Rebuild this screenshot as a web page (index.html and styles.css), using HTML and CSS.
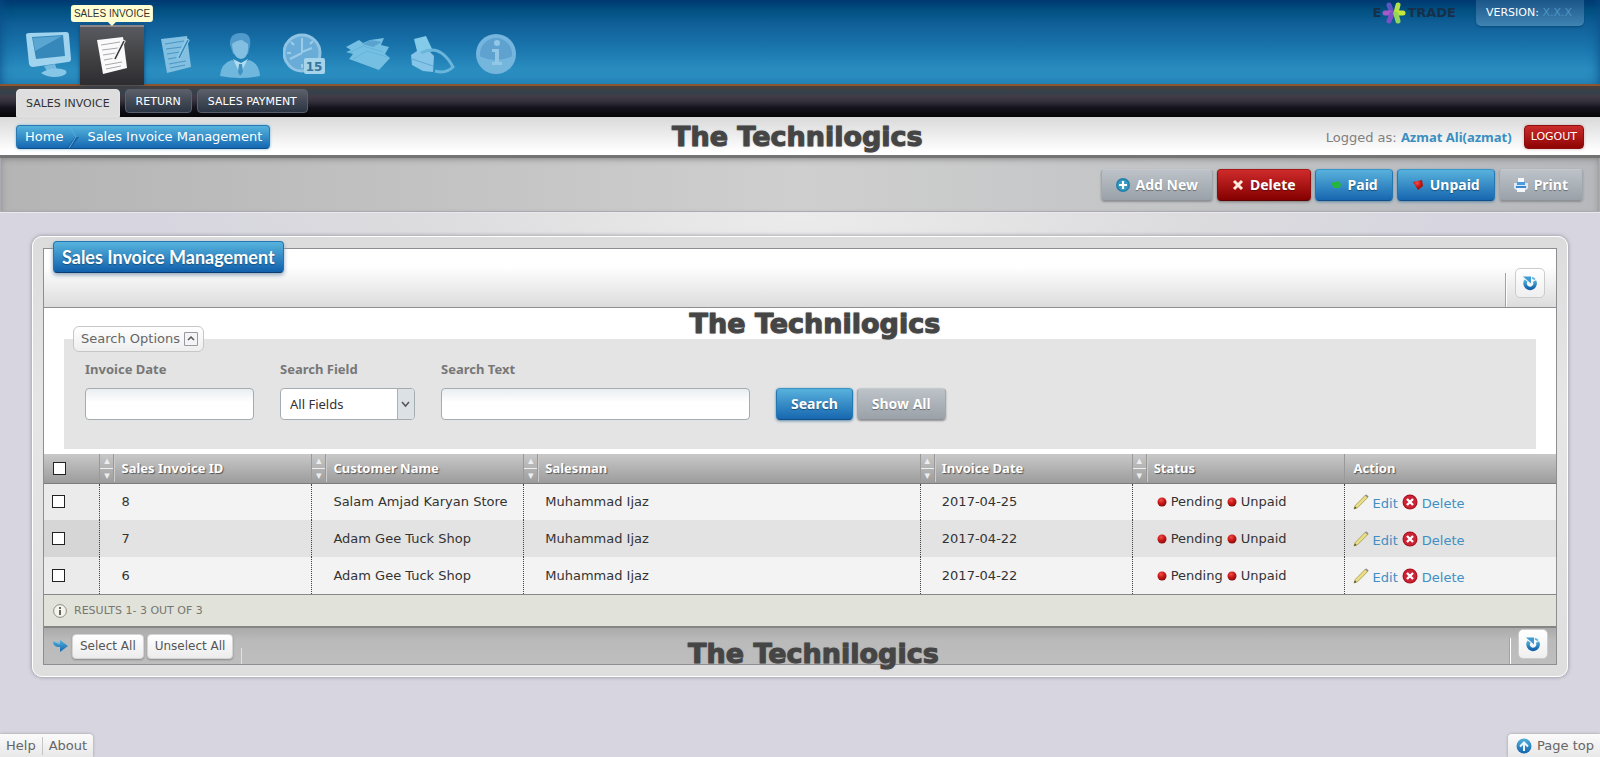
FILE: index.html
```html
<!DOCTYPE html>
<html lang="en">
<head>
<meta charset="utf-8">
<title>Sales Invoice Management</title>
<link rel="stylesheet" href="styles.css">
</head>
<body>
<svg class="defs" aria-hidden="true">
  <defs>
    <linearGradient id="blue" x1="0" y1="0" x2="0" y2="1"><stop offset="0" stop-color="#4fb0d8"/><stop offset="1" stop-color="#1565ae"/></linearGradient>
    <radialGradient id="red" cx=".4" cy=".3" r=".7"><stop offset="0" stop-color="#f0504a"/><stop offset=".5" stop-color="#cc1a1a"/><stop offset="1" stop-color="#8c0c0c"/></radialGradient>
    <symbol id="sheet" viewBox="0 0 32 38">
      <path class="paper" d="M1 3 L27 0 L31 31 L7 37 Z"/>
      <path class="rules" d="M5 8 L24 5 M6 13 L22 11 M7 18 L20 16 M8 23 L19 21 M9 28 L26 25 M10 32 L25 29" fill="none" stroke-width="1"/>
      <path class="pen" d="M28 3 L18 23" fill="none" stroke-width="4"/>
      <path class="pen-core" d="M28 4 L19 22" fill="none" stroke-width="1.6"/>
    </symbol>
    <symbol id="refresh" viewBox="0 0 16 16">
      <path d="M4 5.500 A5 5 0 1 0 12.500 6" fill="none" stroke="url(#blue)" stroke-width="3.600"/>
      <path d="M1 1.500 H9 V8.500 Z" fill="#3f9bd2"/>
      <path d="M10 2.500 l3 2" stroke="#6ab7df" stroke-width="2"/>
    </symbol>
    <symbol id="ball" viewBox="0 0 10 10"><circle cx="5" cy="5" r="4.500" fill="url(#red)"/></symbol>
    <symbol id="cross" viewBox="0 0 16 16"><circle cx="8" cy="8" r="7.500" fill="#a80f1d"/><circle cx="8" cy="8" r="6.500" fill="#cb2436"/><path d="M5 5 L11 11 M11 5 L5 11" stroke="#fff" stroke-width="2.400"/></symbol>
    <symbol id="pencil" viewBox="0 0 16 16"><path d="M1 15 L2.200 11.500 L12.500 1 L15 3.200 L4.500 13.800 Z" fill="#e9dd86" stroke="#a3994f" stroke-width=".8"/><path d="M12 1.500 L14.500 3.800 L15.500 2.500 L13.500 .5 Z" fill="#8c8c8c"/><path d="M1 15 L2 12.500 L3.500 14 Z" fill="#444"/></symbol>
  </defs>
</svg>

<header class="top">
  <nav class="modules" aria-label="Modules">
    <a class="module" href="#" aria-label="Desktop">
      <svg width="48" height="46" viewBox="0 0 48 46"><path d="M2 3 Q2 1 5 1 L42 0 Q45 0 45 3 L47 27 Q47 30 44 30 L9 35 Q6 35 5 32 Z" fill="#9fd3ee"/><path d="M8 5 L39 3 L41 24 L12 27 Z" fill="#3688ba"/><path d="M9 6 L38 4 L11 19 Z" fill="#5aa6d2"/><path d="M20 34 L31 32 L33 38 L23 39 Z" fill="#75b9de"/><path d="M17 41 Q28 34 41 38 Q45 41 38 44 Q26 47 17 41 Z" fill="#86c6e6"/></svg>
    </a>
    <a class="module active" href="#" aria-label="Sales invoice">
      <svg width="32" height="38"><use href="#sheet"/></svg>
      <span class="tip">SALES INVOICE</span>
    </a>
    <a class="module" href="#" aria-label="Purchase invoice">
      <svg class="faded" width="32" height="38"><use href="#sheet"/></svg>
    </a>
    <a class="module" href="#" aria-label="Customers">
      <svg width="42" height="46" viewBox="0 0 42 46"><path d="M11 13 Q10 1 22 1 Q33 1 31 14 L29 22 L14 22 Z" fill="#4f9aca"/><path d="M13 12 Q18 8 23 8 L29 12 Q30 26 22 27 Q14 26 13 12 Z" fill="#83bfe0"/><path d="M1 44 Q2 31 13 28 L21 33 L30 28 Q40 31 41 44 Q21 48 1 44 Z" fill="#70b7de"/><path d="M14 27 L21 42 L29 27 L22 31 Z" fill="#b0dcf0"/><path d="M20 32 L23 32 L24 40 L21 44 L19 40 Z" fill="#4192c2"/></svg>
    </a>
    <a class="module" href="#" aria-label="Calendar">
      <svg width="42" height="44" viewBox="0 0 42 44"><circle cx="19" cy="20" r="18" fill="#69acd8" stroke="#8fc4e4" stroke-width="3"/><path d="M19 5 V19 L29 15 M19 20 L7 26 M8 9 l3 3 M30 8 l-3 3 M4 20 h4 M19 31 v4" stroke="#9bcce8" stroke-width="2" fill="none"/><rect x="21" y="25" width="21" height="16" rx="2" fill="#a5d4eb"/><text x="31" y="38" text-anchor="middle" class="cal-text">15</text></svg>
    </a>
    <a class="module" href="#" aria-label="Stock">
      <svg width="46" height="34" viewBox="0 0 46 34"><path d="M1 9 L14 2 L18 5 L25 2 L39 0 L36 7 L44 9 L40 16 L45 20 L34 32 L4 21 L8 16 L1 14 L6 12 Z" fill="#75c0e2"/><path d="M4 15 L18 8 L38 14 M8 21 L22 13 L42 19" stroke="#66b3da" fill="none"/><path d="M17 6 L26 2 L37 4 L28 9 Z" fill="#5ba3cf"/></svg>
    </a>
    <a class="module" href="#" aria-label="Print">
      <svg width="46" height="38" viewBox="0 0 46 38"><path d="M5 3 L17 0 L24 15 L9 19 Z" fill="#83cbe8"/><path d="M2 19 L8 15 L20 15 L25 20 L24 36 L14 35 L3 29 Z" fill="#86c5e7"/><path d="M3 23 L24 30" stroke="#5ca9d4"/><path d="M12 17 Q31 7 44 31 Q37 38 26 35" fill="none" stroke="#69b5dc" stroke-width="3"/></svg>
    </a>
    <a class="module" href="#" aria-label="Information">
      <svg width="42" height="44" viewBox="0 0 42 44"><circle cx="21" cy="21" r="20" fill="#75b5de"/><circle cx="21" cy="21" r="16" fill="#5fa2cf"/><path d="M4 23 Q21 31 38 23 A17 17 0 0 1 4 23" fill="#74b6dc"/><circle cx="22" cy="10" r="3" fill="#93c7e6"/><path d="M17 16 H24 V29 H27 V32 H17 V29 H20 V19 H17 Z" fill="#93c7e6"/></svg>
    </a>
  </nav>
  <div class="brand">
    <span>E</span>
    <svg width="26" height="24" viewBox="0 0 24 24" aria-hidden="true"><g stroke-width="5" stroke-linecap="round"><path d="M10 12 L7 4" stroke="#5f54c6"/><path d="M9 12 L3 12" stroke="#a55ac8"/><path d="M10 13 L7 20" stroke="#7d4fc4"/><path d="M14 12 L16 4" stroke="#b6e04a"/><path d="M15 12 L21 12" stroke="#c5e83a"/><path d="M14 13 L16 20" stroke="#8fd65a"/></g></svg>
    <span>TRADE</span>
  </div>
  <div class="version"><b>VERSION:</b> <span>X.X.X</span></div>
</header>

<nav class="tabs" aria-label="Sales invoice sections">
  <a class="tab current" href="#">SALES INVOICE</a>
  <a class="tab" href="#">RETURN</a>
  <a class="tab" href="#">SALES PAYMENT</a>
</nav>

<div class="crumb-bar">
  <nav class="crumbs" aria-label="Breadcrumb"><a href="#">Home</a><svg width="12" height="22" viewBox="0 0 12 22" aria-hidden="true"><path d="M0 22 L8 11 L12 11 L4 22 Z" fill="#1b5f9f"/><path d="M2 0 L9 11 L2 22" fill="none" stroke="#56afdb"/></svg><a href="#">Sales Invoice Management</a></nav>
  <div class="mark mark-top">The Technilogics</div>
  <div class="session"><span>Logged as: <a href="#">Azmat Ali(azmat)</a></span><button class="logout" type="button">LOGOUT</button></div>
</div>

<div class="toolbar">
  <button class="btn grey" type="button"><svg width="14" height="14" viewBox="0 0 14 14"><circle cx="7" cy="7" r="7" fill="#247fa8"/><circle cx="7" cy="7" r="5.500" fill="#3499c2"/><path d="M7 3 V11 M3 7 H11" stroke="#fff" stroke-width="2.200"/></svg>Add New</button>
  <button class="btn red" type="button"><svg width="12" height="12" viewBox="0 0 12 12"><path d="M2 2 L10 10 M10 2 L2 10" stroke="#ffeadb" stroke-width="3"/></svg>Delete</button>
  <button class="btn blue" type="button"><svg width="12" height="12" viewBox="0 0 12 12"><path d="M1 4 L8 2 L11 5 L10 9 L4 9 Z" fill="#26b63d"/></svg>Paid</button>
  <button class="btn blue" type="button"><svg width="12" height="12" viewBox="0 0 12 12"><path d="M1 3 L10 1 L11 7 L6 11 Z" fill="url(#red)"/></svg>Unpaid</button>
  <button class="btn grey" type="button"><svg width="14" height="14" viewBox="0 0 14 14"><path d="M4 0 H10 V5 H4 Z" fill="#f5f9fd"/><path d="M0 5 H3 V7 H11 V5 H14 V10 L12 12 H2 L0 10 Z" fill="#dce9f5"/><path d="M3 4 H11 V7 H3 Z" fill="#4a9be0"/><path d="M2 8 H12 V10 H2 Z" fill="#3b87cf"/><path d="M3 10 H11 V14 H3 Z" fill="#f2f6fa"/></svg>Print</button>
</div>

<main class="frame">
  <section class="panel">
    <div class="panel-head">
      <h1>Sales Invoice Management</h1>
      <div class="reload-slot"><button class="reload" type="button" aria-label="Refresh"><svg width="16" height="16"><use href="#refresh"/></svg></button></div>
    </div>
    <div class="mark mark-mid">The Technilogics</div>
    <form class="search">
      <button class="legend" type="button">Search Options <svg width="14" height="14" viewBox="0 0 14 14"><path d="M.5 .5 H13.500 V13.500 H.5 Z" fill="#f4f4f6" stroke="#9a9aa2"/><path d="M4 8 L7 5 L10 8" fill="none" stroke="#555" stroke-width="1.500"/></svg></button>
      <div class="fields">
        <div class="field date"><label for="date">Invoice Date</label><input id="date" type="text"></div>
        <div class="field pick"><label for="column">Search Field</label><div class="select-box"><select id="column"><option>All Fields</option></select><svg width="17" height="30" viewBox="0 0 17 30" aria-hidden="true"><path d="M0 0 H17 V30 H0 Z" fill="#dce1e6"/><path d="M.5 0 V30" stroke="#a9b0b6"/><path d="M5 13 L8.500 17 L12 13" fill="none" stroke="#555" stroke-width="1.500"/></svg></div></div>
        <div class="field term"><label for="term">Search Text</label><input id="term" type="text"></div>
        <div class="go"><button class="btn blue" type="submit">Search</button><button class="btn grey" type="button">Show All</button></div>
      </div>
    </form>
    <table>
      <colgroup><col class="c-check"><col class="c-std"><col class="c-std"><col class="c-man"><col class="c-std"><col class="c-std"><col class="c-std"></colgroup>
      <thead>
        <tr>
          <th><input type="checkbox" aria-label="Select all rows"></th>
          <th><div class="th"><span class="sort"><i>▴</i><i>▾</i></span>Sales Invoice ID</div></th>
          <th><div class="th"><span class="sort"><i>▴</i><i>▾</i></span>Customer Name</div></th>
          <th><div class="th"><span class="sort"><i>▴</i><i>▾</i></span>Salesman</div></th>
          <th><div class="th"><span class="sort"><i>▴</i><i>▾</i></span>Invoice Date</div></th>
          <th><div class="th"><span class="sort"><i>▴</i><i>▾</i></span>Status</div></th>
          <th><div class="th plain">Action</div></th>
        </tr>
      </thead>
      <tbody>
        <tr>
          <td><input type="checkbox" aria-label="Select invoice 8"></td><td>8</td><td>Salam Amjad Karyan Store</td><td>Muhammad Ijaz</td><td>2017-04-25</td>
          <td><div class="status"><svg><use href="#ball"/></svg>Pending <svg><use href="#ball"/></svg>Unpaid</div></td>
          <td><div class="acts"><svg><use href="#pencil"/></svg><a href="#">Edit</a><svg><use href="#cross"/></svg><a href="#">Delete</a></div></td>
        </tr>
        <tr>
          <td><input type="checkbox" aria-label="Select invoice 7"></td><td>7</td><td>Adam Gee Tuck Shop</td><td>Muhammad Ijaz</td><td>2017-04-22</td>
          <td><div class="status"><svg><use href="#ball"/></svg>Pending <svg><use href="#ball"/></svg>Unpaid</div></td>
          <td><div class="acts"><svg><use href="#pencil"/></svg><a href="#">Edit</a><svg><use href="#cross"/></svg><a href="#">Delete</a></div></td>
        </tr>
        <tr>
          <td><input type="checkbox" aria-label="Select invoice 6"></td><td>6</td><td>Adam Gee Tuck Shop</td><td>Muhammad Ijaz</td><td>2017-04-22</td>
          <td><div class="status"><svg><use href="#ball"/></svg>Pending <svg><use href="#ball"/></svg>Unpaid</div></td>
          <td><div class="acts"><svg><use href="#pencil"/></svg><a href="#">Edit</a><svg><use href="#cross"/></svg><a href="#">Delete</a></div></td>
        </tr>
      </tbody>
    </table>
    <div class="results"><svg width="14" height="14" viewBox="0 0 14 14" aria-hidden="true"><circle cx="7" cy="7" r="6.400" fill="#f4f4ec" stroke="#8c8c84"/><path d="M7 3 V5 M7 6 V11" stroke="#66665f" stroke-width="2"/></svg>RESULTS 1- 3 OUT OF 3</div>
    <div class="panel-foot">
      <svg class="arrow" width="17" height="14" viewBox="0 0 17 14" aria-hidden="true"><path d="M1 2 Q1 8 7 8 H8 V13 L16 7 L8 1 V4 Z" fill="url(#blue)"/><path d="M1 2 L8 5" stroke="#8cc5e3"/></svg>
      <button class="small" type="button">Select All</button>
      <button class="small" type="button">Unselect All</button>
      <span class="divider"></span>
      <div class="mark mark-foot">The Technilogics</div>
      <div class="reload-slot"><button class="reload" type="button" aria-label="Refresh"><svg width="16" height="16"><use href="#refresh"/></svg></button></div>
    </div>
  </section>
</main>

<footer class="dock">
  <nav class="dock-box"><a href="#">Help</a><a href="#">About</a></nav>
  <a class="dock-box page-top" href="#"><svg width="16" height="16" viewBox="0 0 16 16" aria-hidden="true"><circle cx="8" cy="8" r="7.500" fill="url(#blue)"/><path d="M8 13 V5 M4 8.500 L8 4.500 L12 8.500" fill="none" stroke="#e9f6fb" stroke-width="2"/></svg>Page top</a>
</footer>
</body>
</html>
```
FILE: styles.css
```css
* { box-sizing: border-box; }

body {
  margin: 0;
  min-height: 100vh;
  display: flex;
  flex-direction: column;
  font: 13px/18px "DejaVu Sans", Verdana, sans-serif;
  color: #333;
  background: radial-gradient(ellipse 640px 220px at 50% 210px, #ececec, #dcdcde 60%, #d7d6e0) #d7d6e0;
}

a { color: #3f8fc4; text-decoration: none; }
button, input, select { font: inherit; }
button { cursor: pointer; }
h1 { margin: 0; }
svg { flex: none; }
.defs { position: absolute; width: 0; height: 0; }

/* Header */
.top {
  display: flex;
  align-items: flex-start;
  height: 86px;
  padding: 0 16px;
  border-bottom: 2px solid #8a5530;
  background: linear-gradient(#00376f 0, #015080 10px, #105f98 24px, #1a76ad 48px, #2a8dc0 70px, #2787ba 84px);
  box-shadow: inset 8px 0 12px -8px #0a4c86, inset -8px 0 12px -8px #0a4c86;
}
.modules { display: flex; padding-top: 25px; }
.module {
  position: relative;
  display: flex;
  align-items: center;
  justify-content: center;
  width: 64px;
  height: 60px;
  --paper: #fafafa;
  --rules: #a9a9ad;
  --pen: #f5f5f5;
  --pen-core: #333;
}
.module.active {
  background: linear-gradient(#595a60, #454548 45%, #2d2c30);
  border-top: 2px solid #8a8586;
  box-shadow: 0 0 4px #0c4673;
}
.faded {
  --paper: #82bfe0;
  --rules: #4a96c6;
  --pen: #8fcbe8;
  --pen-core: #3c87b8;
}
.paper { fill: var(--paper); }
.rules { stroke: var(--rules); }
.pen { stroke: var(--pen); }
.pen-core { stroke: var(--pen-core); }
.cal-text { font: bold 12px "DejaVu Sans", sans-serif; fill: #38749c; }
.tip {
  position: absolute;
  top: -22px;
  left: 50%;
  transform: translateX(-50%);
  padding: 0 3px;
  border-radius: 3px;
  font: 10px/17px "Liberation Sans", Arial, sans-serif;
  white-space: nowrap;
  color: #333;
  background: #ffffd2;
}
.tip::after {
  content: "";
  position: absolute;
  left: 50%;
  top: 100%;
  margin-left: -4px;
  border: 4px solid transparent;
  border-top-color: #ffffd2;
}
.brand {
  display: flex;
  align-items: center;
  margin-left: auto;
  font: bold 13px/26px "DejaVu Sans", sans-serif;
  color: #16304a;
}
.version {
  width: 108px;
  height: 26px;
  margin-left: 20px;
  padding: 4px 0 0 10px;
  border-radius: 0 0 5px 5px;
  font-size: 11px;
  color: #4d93c2;
  white-space: nowrap;
  background: linear-gradient(#1c5688, #3f84b3);
  box-shadow: 0 1px 2px #0a4a78;
}
.version b { font-weight: normal; color: #fff; }

/* Section tabs */
.tabs {
  display: flex;
  align-items: flex-start;
  gap: 5px;
  height: 31px;
  padding: 3px 16px 0;
  background: linear-gradient(#4a3f3b 0, #34414c 6px, #423c48 10px, #35323e 15px, #14131c 22px, #050507);
}
.tab {
  height: 24px;
  padding: 0 10px;
  border: 1px solid #59606b;
  border-radius: 4px;
  font-size: 11px;
  line-height: 23px;
  color: #fff;
  background: linear-gradient(#5b5f69, #2b3543);
}
.tab.current {
  height: 28px;
  padding: 0 9px;
  line-height: 27px;
  border-color: #e2e2e2;
  border-radius: 4px 4px 0 0;
  color: #333;
  background: #dedede;
}

/* Breadcrumb and session */
.crumb-bar {
  position: relative;
  display: flex;
  align-items: center;
  justify-content: space-between;
  height: 41px;
  padding: 2px 16px 0;
  border-bottom: 3px solid #747474;
  background: linear-gradient(#d9d9d9, #fff 90%);
}
.crumbs {
  display: flex;
  align-items: center;
  gap: 4px;
  height: 24px;
  padding: 0 7px 0 8px;
  border: 1px solid #2a78b2;
  border-bottom-color: #0f4d86;
  border-radius: 4px;
  background: linear-gradient(#55b3dc, #1468b2);
  box-shadow: 0 0 3px #7ab8dc;
}
.crumbs a { color: #fff; }
.crumbs svg { margin-right: 4px; }
.session { display: flex; align-items: center; gap: 12px; color: #808080; }
.session a { font-weight: bold; font-family: "Noto Sans", sans-serif; color: #3a8fc0; }
.logout {
  height: 24px;
  padding: 0 6px;
  border: 1px solid #8c1010;
  border-radius: 4px;
  font-size: 11px;
  color: #fff;
  background: linear-gradient(#cb2c2c, #8e0404);
  box-shadow: 0 0 3px #caa;
}

.mark {
  position: absolute;
  z-index: 2;
  font: bold 27px/32px "DejaVu Sans", sans-serif;
  color: #454545;
  -webkit-text-stroke: 1px #454545;
  white-space: nowrap;
  text-shadow: 0 0 2px #888;
  pointer-events: none;
}
.mark-top { left: 42%; top: 4px; }
.mark-mid { left: 42.700%; top: 59px; }
.mark-foot { left: 42.600%; bottom: -6px; }

/* Toolbar */
.toolbar {
  display: flex;
  align-items: flex-start;
  justify-content: flex-end;
  gap: 4px;
  height: 54px;
  padding: 11px 16px 0;
  border: 1px solid #aaaab0;
  border-top: 0;
  background: linear-gradient(90deg, #b4b4b5, #cfcfcf 50%, #b6b8bc);
  box-shadow: inset 0 5px 6px -4px #888, inset 6px 0 6px -5px #999, inset -6px 0 6px -5px #999, 0 1px #e8e8ee;
}
.btn {
  display: inline-flex;
  align-items: center;
  justify-content: center;
  gap: 6px;
  height: 32px;
  padding: 0 14px;
  border: 1px solid;
  border-radius: 4px;
  font: bold 14px/20px "Noto Sans", "Open Sans", sans-serif;
  color: #fff;
  text-shadow: 0 1px 1px rgba(0, 0, 0, .4);
  white-space: nowrap;
}
.btn.grey { border-color: #c4c9cd #a3a8ad #8d9297; background: linear-gradient(#bcc2c8, #9aa1a8); box-shadow: 0 1px 2px #8c8c90; }
.btn.red { border-color: #a41818 #8c1010 #5c0404; background: linear-gradient(#cf2b2b, #850000); box-shadow: 0 1px 3px #777; }
.btn.blue { border-color: #3795c8 #2577b2 #124f88; background: linear-gradient(#58b1dc, #1767b0); box-shadow: 0 1px 3px #5b88a8; }

/* Main panel */
.frame {
  margin: 24px 32px 0;
  padding: 11px 10px;
  border: 1px solid #fff;
  border-radius: 10px;
  background: linear-gradient(#dcdcdc, #e6e6e6 40%, #dedede);
  box-shadow: 0 0 4px #8a8a96;
}
.panel { position: relative; border: 1px solid #8d8d92; background: #fff; }
.panel-head {
  display: flex;
  align-items: flex-start;
  justify-content: space-between;
  height: 59px;
  border-bottom: 1px solid #8d8d92;
  background: linear-gradient(#fff 30%, #dcdcdc);
}
h1 {
  margin: -8px 0 0 9px;
  padding: 0 8px;
  height: 32px;
  border: 1px solid #2476b2;
  border-bottom-color: #0d3d70;
  border-radius: 4px;
  font: bold 18px/30px Lato, "Open Sans", sans-serif;
  color: #fff;
  text-shadow: 0 1px 1px #17517f;
  background: linear-gradient(#57b4dd, #1160ac);
  box-shadow: 0 2px 4px #8ea4b8;
}
.reload-slot {
  display: flex;
  align-items: center;
  align-self: flex-end;
  height: 34px;
  padding: 0 11px 0 9px;
  border-left: 1px solid #a2a2a2;
  box-shadow: inset 1px 0 #fff;
}
.reload {
  display: flex;
  align-items: center;
  justify-content: center;
  width: 30px;
  height: 30px;
  margin-bottom: 14px;
  padding: 0;
  border: 1px solid #ccc;
  border-radius: 5px;
  background: linear-gradient(#fff, #efefef);
}

/* Search form */
.search {
  position: relative;
  margin: 31px 20px 5px;
  height: 110px;
  padding: 20px 21px;
  background: #e4e4e4;
}
.legend {
  position: absolute;
  top: -13px;
  left: 9px;
  display: flex;
  align-items: center;
  gap: 4px;
  height: 26px;
  padding: 0 5px 0 7px;
  border: 1px solid #c6c6c6;
  border-radius: 6px;
  color: #666;
  background: linear-gradient(#fff, #eee);
  white-space: nowrap;
}
.fields { display: flex; align-items: flex-end; gap: 26px; }
.field { display: flex; flex-direction: column; gap: 9px; }
.field label { font: bold 13px/20px "Noto Sans", sans-serif; color: #777; }
.date { flex: 0 1 169px; }
.pick { flex: 0 1 135px; }
.term { flex: 0 1 309px; }
.field input, .select-box {
  width: 100%;
  height: 32px;
  border: 1px solid #a5acb0;
  border-radius: 4px;
  background: linear-gradient(#e9eef1, #fff 45%);
}
.field input { padding: 0 8px; }
.select-box { display: flex; overflow: hidden; background: #fff; }
.select-box select { flex: 1; min-width: 0; padding: 0 9px; border: 0; appearance: none; font: 13px/20px "Noto Sans", sans-serif; color: #333; background: none; }
.go { display: flex; gap: 4px; }

/* Invoice table */
table { width: 100%; table-layout: fixed; border-collapse: collapse; }
.c-check { width: 3.700%; }
.c-std { width: 14%; }
.c-man { width: 26.200%; }
th {
  height: 29px;
  padding: 0;
  text-align: left;
  border-bottom: 1px solid #7c7c7c;
  border-left: 1px solid #999;
  color: #fff;
  font: bold 13px/18px "Noto Sans", sans-serif;
  text-shadow: 1px 1px 1px #555;
  background: linear-gradient(#c8c8c8, #9c9c9c);
}
th:first-child { padding-left: 9px; border-left: 0; }
.th { display: flex; align-items: center; gap: 7px; }
.plain { padding-left: 9px; }
.sort { display: flex; flex-direction: column; width: 14px; height: 28px; border-right: 1px solid #999; box-shadow: 1px 0 #ccc; }
.sort i { flex: 1; font: 11px/13px "DejaVu Sans", sans-serif; text-align: center; color: #eee; text-shadow: none; }
.sort i + i { border-top: 1px solid #eee; }
td { height: 37px; padding: 0 0 0 21px; border-left: 1px dotted #444; background: #f3f3f3; white-space: nowrap; }
tr:nth-child(even) td { background: #e3e3e3; }
td:first-child { padding: 0 0 0 8px; border-left: 0; background: #ebebeb; }
tr:nth-child(even) td:first-child { background: #d6d6d6; }
td:last-child { padding: 0 8px; }
input[type="checkbox"] {
  appearance: none;
  display: block;
  width: 13px;
  height: 13px;
  margin: 0;
  border: 1px solid #222;
  background: #fff;
}
.status { display: flex; align-items: center; gap: 4px; margin-left: 3px; }
.status svg { width: 10px; height: 10px; }
.acts { display: flex; align-items: center; gap: 4px; padding-top: 4px; }
.acts svg { width: 16px; height: 16px; margin-bottom: 4px; }

.results {
  display: flex;
  align-items: center;
  gap: 7px;
  height: 32px;
  padding-left: 9px;
  border-top: 1px solid #888;
  font-size: 11px;
  color: #77776f;
  background: #e1e2da;
}
.panel-foot {
  position: relative;
  display: flex;
  align-items: center;
  gap: 3px;
  height: 38px;
  padding-left: 8px;
  border-top: 2px solid #858585;
  background: linear-gradient(#aaa, #bababa 12px, #bebebe);
}
.small {
  height: 25px;
  padding: 0 7px;
  border: 1px solid #d4d4d4;
  border-radius: 4px;
  color: #555;
  font-size: 12px;
  background: linear-gradient(#fff, #ececec);
  box-shadow: 0 1px 2px #888;
}
.divider { align-self: flex-end; height: 16px; margin-left: 5px; border-left: 1px solid #e2e2e2; }
.panel-foot .reload-slot { height: 26px; margin-left: auto; padding: 0 8px; }

/* Bottom dock */
.dock { display: flex; justify-content: space-between; margin-top: auto; }
.dock-box { display: flex; align-items: center; height: 23px; color: #666; background: linear-gradient(#fbfbfb, #e8e8e8); box-shadow: 0 0 3px #999; }
nav.dock-box { border-radius: 0 4px 0 0; }
.dock a { color: #666; }
.dock nav a { padding: 0 6px; }
.dock nav a + a { border-left: 1px solid #c6c6c6; }
.page-top { gap: 5px; padding: 0 6px 0 8px; border-radius: 4px 0 0 0; }
```
